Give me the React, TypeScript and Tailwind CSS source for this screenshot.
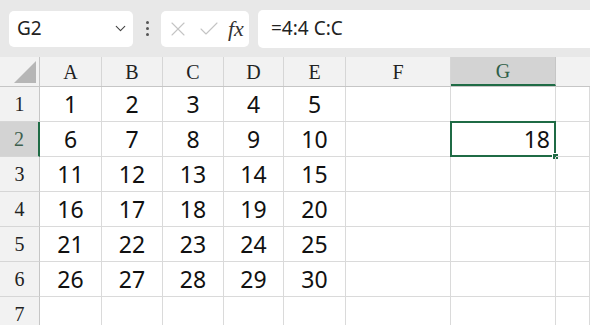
import { ChevronDown, X, Check } from "lucide-react";

const cols = [
  { key: "A", w: "w-[62px]" },
  { key: "B", w: "w-[61px]" },
  { key: "C", w: "w-[61px]" },
  { key: "D", w: "w-[60px]" },
  { key: "E", w: "w-[62px]" },
  { key: "F", w: "w-[105px]" },
  { key: "G", w: "w-[105px]" },
  { key: "H", w: "flex-1" },
];

const rows = [1, 2, 3, 4, 5, 6, 7];

function cellValue(r: number, c: number) {
  if (r <= 6 && c < 5) return String((r - 1) * 5 + c + 1);
  return "";
}

export default function App() {
  return (
    <div className="w-[590px] h-[325px] overflow-hidden bg-white font-['Noto_Sans',sans-serif]">
      {/* Toolbar */}
      <div className="flex h-[57px] items-center gap-[9px] bg-[#e8e8e8] pl-[9px]">
        <div className="flex h-[36px] w-[124px] items-center justify-between rounded-[5px] bg-white pl-[8px] pr-[4px]">
          <span className="text-[19px] text-[#222]">G2</span>
          <ChevronDown className="h-[17px] w-[17px] text-[#444]" strokeWidth={1.6} />
        </div>
        <div className="flex w-[10px] flex-col items-center gap-[3px]">
          <span className="h-[3px] w-[3px] rounded-full bg-[#555]" />
          <span className="h-[3px] w-[3px] rounded-full bg-[#555]" />
          <span className="h-[3px] w-[3px] rounded-full bg-[#555]" />
        </div>
        <div className="flex h-[36px] w-[88px] items-center gap-[7px] rounded-[5px] bg-white pl-[5px]">
          <X className="h-[24px] w-[24px] text-[#c4c4c4]" strokeWidth={1.1} />
          <Check className="h-[24px] w-[24px] text-[#c4c4c4]" strokeWidth={1.1} />
          <span className="font-['Liberation_Serif',serif] text-[22px] italic text-[#333]">fx</span>
        </div>
        <div className="flex h-[38px] flex-1 items-center rounded-l-[5px] bg-white pl-[13px]">
          <span className="text-[19px] text-[#222]">=4:4 C:C</span>
        </div>
      </div>

      {/* Column header */}
      <div className="flex h-[30px] border-b border-[#c6c6c6] bg-[#f2f2f2]">
        <div className="relative w-[40px] border-r border-[#c6c6c6]">
          <svg className="absolute bottom-[3px] right-[3px]" width="22" height="22" viewBox="0 0 22 22">
            <polygon points="22,0 22,22 0,22" fill="#b6b6b6" />
          </svg>
        </div>
        {cols.map((c) => (
          <div
            key={c.key}
            className={`${c.w} flex items-center justify-center border-r font-['Liberation_Serif',serif] text-[20px] ${
              c.key === "G"
                ? "border-[#c6c6c6] border-b-2 border-b-[#1f6b45] bg-[#d3d3d3] text-[#2f5f48]"
                : "border-[#d6d6d6] text-[#222]"
            } ${c.key === "H" ? "border-r-0" : ""}`}
          >
            {c.key === "H" ? "" : c.key}
          </div>
        ))}
      </div>

      {/* Rows */}
      {rows.map((r) => (
        <div key={r} className="flex h-[35px]">
          <div
            className={`flex w-[40px] items-center justify-center border-b font-['Liberation_Serif',serif] text-[20px] ${
              r === 2
                ? "border-b-[#d6d6d6] border-r-2 border-r-[#1f6b45] bg-[#d3d3d3] text-[#3d5f4e]"
                : "border-r border-[#d6d6d6] border-r-[#c6c6c6] bg-[#f2f2f2] text-[#222]"
            }`}
          >
            {r}
          </div>
          {cols.map((c, ci) => {
            const selected = r === 2 && c.key === "G";
            return (
              <div
                key={c.key}
                className={`${c.w} relative flex items-center border-b border-r border-[#dadada] text-[23px] text-[#111] ${
                  ci < 5 ? "justify-center" : "justify-end pr-[5px]"
                }`}
              >
                {selected ? (
                  <>
                    <div className="absolute -left-px -top-px bottom-[-1px] right-[-1px] border-2 border-[#1f6b45]" />
                    <div className="absolute bottom-[-4px] right-[-4px] h-[7px] w-[7px] border border-white bg-[#1f6b45]" />
                    <span className="relative">18</span>
                  </>
                ) : (
                  cellValue(r, ci)
                )}
              </div>
            );
          })}
        </div>
      ))}
    </div>
  );
}
